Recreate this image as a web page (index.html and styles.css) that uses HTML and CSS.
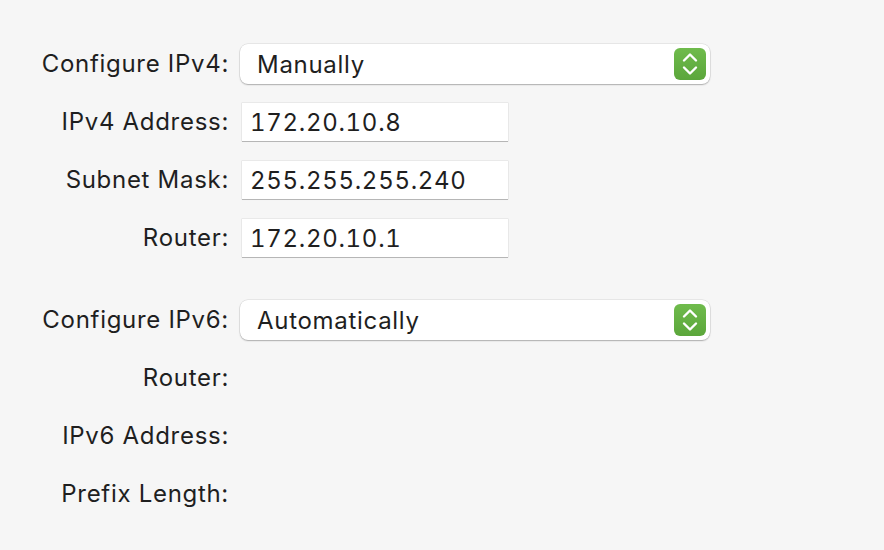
FILE: index.html
```html
<!DOCTYPE html>
<html>
<head>
<meta charset="utf-8">
<link rel="stylesheet" href="styles.css">
</head>
<body>
<div class="form">
  <div class="group">
    <div class="label">Configure IPv4:</div>
    <div class="popup"><span class="popup-text">Manually</span><span class="stepper"><svg width="32" height="32" viewBox="0 0 32 32"><path d="M10 12.5 L16 6.5 L22 12.5" fill="none" stroke="#fff" stroke-width="2.4" stroke-linecap="round" stroke-linejoin="round"/><path d="M10 19.5 L16 25.5 L22 19.5" fill="none" stroke="#fff" stroke-width="2.4" stroke-linecap="round" stroke-linejoin="round"/></svg></span></div>
    <div class="label">IPv4 Address:</div>
    <div class="field">172.20.10.8</div>
    <div class="label">Subnet Mask:</div>
    <div class="field">255.255.255.240</div>
    <div class="label">Router:</div>
    <div class="field">172.20.10.1</div>
  </div>
  <div class="group second">
    <div class="label">Configure IPv6:</div>
    <div class="popup"><span class="popup-text">Automatically</span><span class="stepper"><svg width="32" height="32" viewBox="0 0 32 32"><path d="M10 12.5 L16 6.5 L22 12.5" fill="none" stroke="#fff" stroke-width="2.4" stroke-linecap="round" stroke-linejoin="round"/><path d="M10 19.5 L16 25.5 L22 19.5" fill="none" stroke="#fff" stroke-width="2.4" stroke-linecap="round" stroke-linejoin="round"/></svg></span></div>
    <div class="label">Router:</div>
    <div class="empty"></div>
    <div class="label">IPv6 Address:</div>
    <div class="empty"></div>
    <div class="label">Prefix Length:</div>
    <div class="empty"></div>
  </div>
</div>
</body>
</html>
```

FILE: styles.css
```css
html, body {
  margin: 0;
  padding: 0;
  background: #f6f6f6;
}
body {
  width: 884px;
  height: 550px;
  overflow: hidden;
  font-family: Inter, "Open Sans", sans-serif;
  color: #1f1f1f;
  letter-spacing: 0.7px;
}
.form {
  padding-top: 35px;
  display: flex;
  flex-direction: column;
  gap: 24px;
}
.group {
  display: grid;
  grid-template-columns: 228px 470px;
  grid-auto-rows: 58px;
  column-gap: 12px;
  align-items: center;
}
.label {
  text-align: right;
  font-size: 24px;
  line-height: 30px;
  margin-right: -1px;
}
.popup {
  height: 40px;
  background: #ffffff;
  border-radius: 8px;
  box-shadow: 0 0 0 0.5px rgba(0,0,0,0.12), 0 1px 1.5px rgba(0,0,0,0.25);
  display: flex;
  align-items: center;
  justify-content: space-between;
  padding: 0 4px 0 17px;
  box-sizing: border-box;
  font-size: 24px;
}
.stepper {
  width: 32px;
  height: 32px;
  border-radius: 6px;
  background: linear-gradient(#6fbb4c, #5ba63b);
  display: flex;
}
.field {
  margin-left: 2px;
  width: 266px;
  height: 38px;
  box-sizing: border-box;
  background: #ffffff;
  box-shadow: 0 0 0 0.5px rgba(0,0,0,0.1), 0 1px 0.5px rgba(0,0,0,0.22);
  padding-left: 8px;
  display: flex;
  align-items: center;
  font-size: 24px;
  font-variant-numeric: tabular-nums;
}
```
